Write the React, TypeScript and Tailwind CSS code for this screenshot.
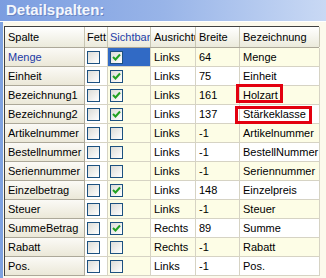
import React from "react";

type Row = {
  name: string;
  bold: boolean;
  visible: boolean;
  align: string;
  width: string;
  label: string;
};

const rows: Row[] = [
  { name: "Menge", bold: false, visible: true, align: "Links", width: "64", label: "Menge" },
  { name: "Einheit", bold: false, visible: true, align: "Links", width: "75", label: "Einheit" },
  { name: "Bezeichnung1", bold: false, visible: true, align: "Links", width: "161", label: "Holzart" },
  { name: "Bezeichnung2", bold: false, visible: true, align: "Links", width: "137", label: "Stärkeklasse" },
  { name: "Artikelnummer", bold: false, visible: false, align: "Links", width: "-1", label: "Artikelnummer" },
  { name: "Bestellnummer", bold: false, visible: false, align: "Links", width: "-1", label: "BestellNummer" },
  { name: "Seriennummer", bold: false, visible: false, align: "Links", width: "-1", label: "Seriennummer" },
  { name: "Einzelbetrag", bold: false, visible: true, align: "Links", width: "148", label: "Einzelpreis" },
  { name: "Steuer", bold: false, visible: false, align: "Links", width: "-1", label: "Steuer" },
  { name: "SummeBetrag", bold: false, visible: true, align: "Rechts", width: "89", label: "Summe" },
  { name: "Rabatt", bold: false, visible: false, align: "Rechts", width: "-1", label: "Rabatt" },
  { name: "Pos.", bold: false, visible: false, align: "Links", width: "-1", label: "Pos." },
];

function Check({ checked }: { checked: boolean }) {
  return (
    <div className="w-[13px] h-[13px] shrink-0 border border-[#1c5180] bg-gradient-to-br from-[#dcdcd7] to-[#ffffff] flex items-center justify-center">
      {checked && (
        <svg width="9" height="9" viewBox="0 0 9 9">
          <path d="M1 4 L3.5 6.5 L8 1.5" fill="none" stroke="#21a121" strokeWidth="2" />
        </svg>
      )}
    </div>
  );
}

const headCell =
  "h-full flex items-center border-r border-[#c7c5b2] bg-gradient-to-b from-[#ffffff] to-[#ebeadb] overflow-hidden whitespace-nowrap shrink-0";

export default function App() {
  return (
    <div
      className="w-[326px] h-[278px] overflow-hidden bg-[#fcf9ec] text-[11px] text-black flex flex-col"
      style={{ fontFamily: '"Liberation Sans", Arial, sans-serif' }}
    >
      <div className="h-[22px] shrink-0 bg-gradient-to-r from-[#7b9de0] via-[#98b4e8] to-[#c9d9f4] flex items-center pl-[6px] border-b border-[#ffffff]">
        <span className="text-[15px] font-bold text-[#f4f7fd] [text-shadow:1px_1px_0_#6a86c4]">Detailspalten:</span>
      </div>
      <div className="flex flex-1">
        <div className="w-[3px] bg-[#7fa2e0]" />
        <div className="flex-1 pt-[4px] pl-[1px]">
          <div className="relative w-[315px] border-t border-l border-[#404040]">
            <div className="flex h-[21px] border-b border-[#aca899]">
              <div className={headCell + " w-[80px] pl-[3px]"}>Spalte</div>
              <div className={headCell + " w-[23px] pl-[2px]"}>Fett</div>
              <div className={headCell + " w-[43px] pl-[2px] text-[#1d3fa8]"}>Sichtbar</div>
              <div className={headCell + " w-[45px] pl-[3px]"}>
                <span className="block w-[41px] overflow-hidden">Ausrichtung</span>
              </div>
              <div className={headCell + " w-[44px] pl-[3px]"}>Breite</div>
              <div className={headCell + " w-[80px] pl-[3px]"}>Bezeichnung</div>
            </div>
            {rows.map((r, i) => {
              const yellow = i % 2 === 0;
              const bg = yellow ? "bg-[#fdfde6]" : "bg-[#ffffff]";
              const sel = i === 0;
              return (
                <div key={r.name} className="flex h-[19px]">
                  <div className="w-[80px] shrink-0 h-full flex items-center pl-[3px] bg-gradient-to-b from-[#fbfaf6] to-[#ebe8d8] border-r border-b border-[#aca899] whitespace-nowrap overflow-hidden">
                    <span className={sel ? "text-[#1c3aa6]" : ""}>{r.name}</span>
                  </div>
                  <div className="w-[23px] shrink-0 h-full flex items-center pl-[2px] bg-[#ffffff] border-r border-b border-[#d6d3c4]">
                    <Check checked={r.bold} />
                  </div>
                  <div
                    className={
                      "w-[43px] shrink-0 h-full flex items-center pl-[2px] border-r border-b border-[#d6d3c4] " +
                      (sel ? "bg-[#316ac5]" : "bg-[#fdfde6]")
                    }
                  >
                    <Check checked={r.visible} />
                  </div>
                  <div className={"w-[45px] shrink-0 h-full flex items-center pl-[3px] border-r border-b border-[#d6d3c4] overflow-hidden " + bg}>
                    {r.align}
                  </div>
                  <div className={"w-[44px] shrink-0 h-full flex items-center pl-[3px] border-r border-b border-[#d6d3c4] " + bg}>
                    {r.width}
                  </div>
                  <div className={"w-[80px] shrink-0 h-full flex items-center pl-[3px] border-r border-b border-[#d6d3c4] whitespace-nowrap overflow-hidden " + bg}>
                    {r.label}
                  </div>
                </div>
              );
            })}
            <div className="absolute left-[231px] top-[57px] w-[47px] h-[19px] border-[3px] border-[#e3000f]" />
            <div className="absolute left-[230px] top-[79px] w-[77px] h-[18px] border-[3px] border-[#e3000f]" />
          </div>
        </div>
      </div>
    </div>
  );
}
